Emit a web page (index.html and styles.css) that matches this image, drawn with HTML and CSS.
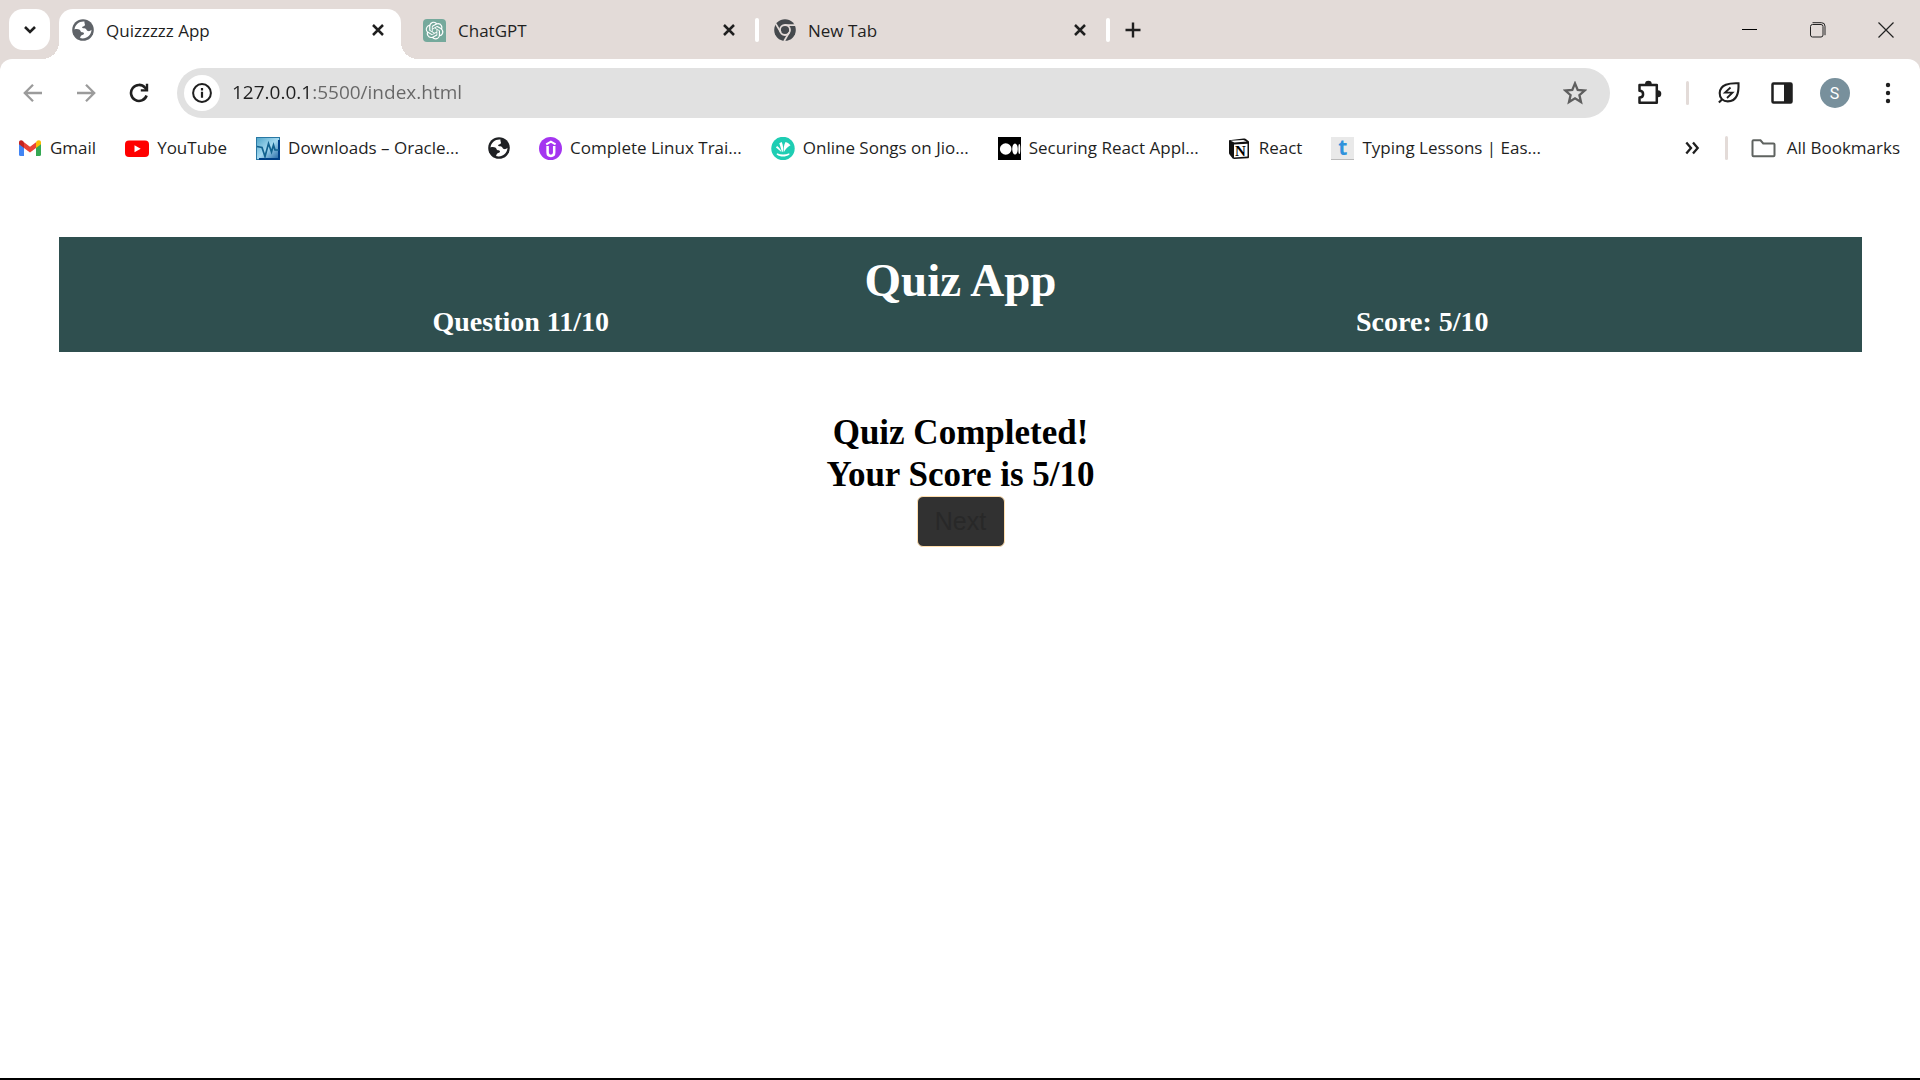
FILE: index.html
```html
<!DOCTYPE html>
<html lang="en">
<head>
<meta charset="utf-8">
<title>Quizzzzz App</title>
<link rel="stylesheet" href="styles.css">
</head>
<body>
<svg class="defs" width="0" height="0" aria-hidden="true">
  <symbol id="globe" viewBox="0 0 22 22">
    <circle cx="11" cy="11" r="10.800" fill="currentColor"/>
    <path fill="#fff" d="M12.500 2.600C7.500 2 3 5.600 2.500 10.400c1.700-.5 4-.4 5.200.4 1 .7.700 2.200 2 2.500 1.200.3 2.300.2 2.300 1.300 0 1.400-1.800 1.200-2.700 2-.8.700-.9 1.800-1.300 2.500 5.500 1.700 11.300-2.200 11.500-8.300-1 1.100-2.300 1.600-3.700 1.200-1.300-.4-1.300-2-2.600-2.500-1.300-.4-3 .1-3.100-1 0-1.300 2-1 2.700-2 .7-1-.8-2.200-.3-3.900z"/>
  </symbol>
  <symbol id="cross" viewBox="0 0 14 14">
    <path d="M2 2l10 10M12 2L2 12" fill="none" stroke="currentColor" stroke-width="2.500"/>
  </symbol>
</svg>

<header class="browser">
  <div class="tabstrip">
    <button class="tab-search" aria-label="Search tabs">
      <svg width="14" height="10" viewBox="0 0 14 10"><path d="M2 2l5 5 5-5" fill="none" stroke="#1f1f1f" stroke-width="2.600"/></svg>
    </button>
    <div class="tab tab-active">
      <svg class="tab-icon gray" width="22" height="22"><use href="#globe"/></svg>
      <span class="tab-title">Quizzzzz App</span>
      <button class="tab-close" aria-label="Close tab"><svg width="14" height="14"><use href="#cross"/></svg></button>
    </div>
    <div class="tab">
      <svg class="tab-icon" width="23" height="23" viewBox="0 0 23 23"><path d="M4 0h15a4 4 0 0 1 4 4v19H4a4 4 0 0 1-4-4V4a4 4 0 0 1 4-4z" fill="#75a99c"/><g transform="translate(2.700 2.700) scale(.74)" fill="#fff"><path d="M22.282 9.821a5.985 5.985 0 0 0-.516-4.911 6.046 6.046 0 0 0-6.510-2.900A6.065 6.065 0 0 0 4.981 4.182a5.985 5.985 0 0 0-3.998 2.900 6.046 6.046 0 0 0 .743 7.097 5.980 5.980 0 0 0 .511 4.911 6.051 6.051 0 0 0 6.515 2.900A5.985 5.985 0 0 0 13.260 24a6.056 6.056 0 0 0 5.772-4.206 5.989 5.989 0 0 0 3.998-2.900 6.056 6.056 0 0 0-.748-7.073zm-9.022 12.608a4.476 4.476 0 0 1-2.876-1.041l.142-.080 4.778-2.758a.795.795 0 0 0 .393-.681v-6.737l2.020 1.169a.071.071 0 0 1 .038.052v5.583a4.504 4.504 0 0 1-4.495 4.494zm-9.661-4.125a4.471 4.471 0 0 1-.535-3.014l.142.085 4.783 2.758a.771.771 0 0 0 .781 0l5.843-3.369v2.332a.080.080 0 0 1-.033.062L9.740 19.950a4.499 4.499 0 0 1-6.141-1.646zM2.341 7.896a4.485 4.485 0 0 1 2.366-1.973V11.600a.766.766 0 0 0 .388.677l5.814 3.354-2.020 1.169a.076.076 0 0 1-.071 0l-4.830-2.787A4.504 4.504 0 0 1 2.341 7.872zm16.596 3.856L13.104 8.364 15.119 7.200a.076.076 0 0 1 .071 0l4.830 2.791a4.494 4.494 0 0 1-.677 8.104v-5.677a.790.790 0 0 0-.407-.667zm2.011-3.023l-.142-.085-4.774-2.782a.776.776 0 0 0-.785 0L9.409 9.230V6.897a.066.066 0 0 1 .028-.062l4.830-2.787a4.499 4.499 0 0 1 6.680 4.660zM8.307 12.863l-2.020-1.164a.080.080 0 0 1-.038-.057V6.074a4.499 4.499 0 0 1 7.376-3.454l-.142.081L8.704 5.459a.795.795 0 0 0-.393.681zm1.098-2.365l2.602-1.500 2.607 1.500v2.999l-2.597 1.500-2.607-1.500z"/></g></svg>
      <span class="tab-title">ChatGPT</span>
      <button class="tab-close" aria-label="Close tab"><svg width="14" height="14"><use href="#cross"/></svg></button>
      <span class="tab-divider"></span>
    </div>
    <div class="tab">
      <svg class="tab-icon" width="22" height="22" viewBox="0 0 22 22"><circle cx="11" cy="11" r="10.800" fill="#45494d"/><circle cx="11" cy="11" r="5" fill="none" stroke="#e3dbd8" stroke-width="1.800"/><path d="M11 6.200h10M6.800 13.400L1.800 4.900M15.200 13.400l-5 8.600" stroke="#e3dbd8" stroke-width="1.800"/></svg>
      <span class="tab-title">New Tab</span>
      <button class="tab-close" aria-label="Close tab"><svg width="14" height="14"><use href="#cross"/></svg></button>
      <span class="tab-divider"></span>
    </div>
    <button class="new-tab" aria-label="New tab"><svg width="16" height="16" viewBox="0 0 16 16"><path d="M8 0.500v15M.5 8h15" stroke="#1f1f1f" stroke-width="2.400"/></svg></button>
    <div class="window-controls">
      <button aria-label="Minimize"><svg width="16" height="16" viewBox="0 0 16 16"><path d="M0 7.500h15" stroke="#000"/></svg></button>
      <button aria-label="Restore"><svg width="16" height="16" viewBox="0 0 16 16" fill="none" stroke="#222"><rect x=".5" y="2.500" width="12.500" height="12.500" rx="2"/><path d="M2.500 .7h9a3.500 3.500 0 0 1 3.500 3.500v9"/></svg></button>
      <button aria-label="Close"><svg width="16" height="16" viewBox="0 0 16 16"><path d="M.5.5l15 15M15.500.5l-15 15" stroke="#222" stroke-width="1.200"/></svg></button>
    </div>
  </div>

  <div class="toolbar">
    <button class="tool" aria-label="Back"><svg width="20" height="20" viewBox="0 0 20 20"><path d="M19 10H2.500M10 1.800L1.800 10l8.200 8.200" fill="none" stroke="#9b9b9b" stroke-width="2.300"/></svg></button>
    <button class="tool" aria-label="Forward"><svg width="20" height="20" viewBox="0 0 20 20"><path d="M1 10h16.500M10 1.800l8.200 8.200-8.200 8.200" fill="none" stroke="#9b9b9b" stroke-width="2.300"/></svg></button>
    <button class="tool" aria-label="Reload"><svg width="20" height="20" viewBox="0 0 20 20"><path d="M17.600 12.500A8 8 0 1 1 16 4.600L18 7" fill="none" stroke="#1f1f1f" stroke-width="2.600"/><path d="M19.200.8v7.700h-7.400V6.200h5V.8z" fill="#1f1f1f"/></svg></button>
    <div class="omnibox">
      <button class="site-info" aria-label="Site information"><svg width="20" height="20" viewBox="0 0 20 20"><circle cx="10" cy="10" r="8.900" fill="none" stroke="#1f1f1f" stroke-width="2"/><path d="M10 8.800v6M10 5v2.400" stroke="#1f1f1f" stroke-width="2.200"/></svg></button>
      <input class="address" type="text" aria-label="Address" value="127.0.0.1:5500/index.html">
      <button class="bookmark-star" aria-label="Bookmark this tab"><svg width="24" height="24" viewBox="0 0 24 24"><path d="M12 2.400l2.700 6.500 7 .6-5.300 4.600 1.600 6.900-6-3.700L6 21l1.600-6.900L2.300 9.500l7-.6z" fill="none" stroke="#5f5f5f" stroke-width="2.300"/></svg></button>
    </div>
    <button class="tool" aria-label="Extensions"><svg width="26" height="26" viewBox="0 0 26 26"><path d="M4.500 5h16.300v17.800H3.500v-5.300c4.800 0 4.800-6.700 0-6.700V5z" fill="none" stroke="#1f1f1f" stroke-width="2.500" stroke-linejoin="round"/><path d="M9 4.200a3.400 3.400 0 0 1 6.800 0zM21.800 10.300a3.400 3.400 0 0 1 0 7z" fill="#1f1f1f"/></svg></button>
    <span class="toolbar-divider"></span>
    <button class="tool" aria-label="Energy Saver"><svg width="24" height="24" viewBox="0 0 24 24" fill="none" stroke="#1f1f1f" stroke-width="2.100"><path d="M21.500 2.300c-9-.4-18.500 1-18.800 9.800-.2 5 3.500 8.300 8 8.300 9.500 0 11.200-9 10.800-18.100zM5.500 18l-3.600 3.600"/><path d="M13.500 6.500L8 11.600h7.500L10 17" stroke-width="1.800"/></svg></button>
    <button class="tool" aria-label="Side panel"><svg width="22" height="22" viewBox="0 0 22 22"><rect x="1.500" y="1.500" width="19" height="19" rx="1" fill="none" stroke="#1f1f1f" stroke-width="2.500"/><path d="M13 1h8v20h-8z" fill="#1f1f1f"/></svg></button>
    <button class="tool" aria-label="Profile"><span class="avatar">S</span></button>
    <button class="tool" aria-label="Menu"><svg width="6" height="22" viewBox="0 0 6 22" fill="#1f1f1f"><circle cx="3" cy="3" r="2.200"/><circle cx="3" cy="11" r="2.200"/><circle cx="3" cy="19" r="2.200"/></svg></button>
  </div>

  <nav class="bookmarks" aria-label="Bookmarks">
    <a class="bookmark" href="#"><svg width="23" height="23" viewBox="0 0 23 23"><path d="M0 6v11.500q0 1.500 1.500 1.500H5V9z" fill="#4285f4"/><path d="M17 9v10h3.500q1.500 0 1.500-1.500V6z" fill="#34a853"/><path d="M17 5.200V11l5-3.700V5.600c0-2.700-2.400-3-4-1.800z" fill="#fbbc04"/><path d="M5 5.200l6 4.500 6-4.500V11l-6 4.500L5 11z" fill="#ea4335"/><path d="M0 5.600v1.700L5 11V5.200L4 4C2.400 2.600 0 3 0 5.600z" fill="#c5221f"/></svg>Gmail</a>
    <a class="bookmark" href="#"><svg width="24" height="23" viewBox="0 0 24 23"><rect y="3.500" width="24" height="16.500" rx="4" fill="#f00"/><path d="M9.500 8.200v7l6.200-3.500z" fill="#fff"/></svg>YouTube</a>
    <a class="bookmark" href="#"><svg width="24" height="23" viewBox="0 0 24 23"><defs><linearGradient id="wave" x2="1" y2="1"><stop stop-color="#4fa5c9"/><stop offset=".5" stop-color="#a5d9f0"/><stop offset="1" stop-color="#1a5fa0"/></linearGradient></defs><rect x=".5" y=".5" width="23" height="22" fill="url(#wave)" stroke="#2878a4"/><path d="M23 3v19H3" fill="none" stroke="#003f86" stroke-width="2"/><path d="M1 9.500l5 1 3 9 3.500-13 3 8.500 2-7 1.500 5h4" fill="none" stroke="#12628f" stroke-width="1.700"/></svg>Downloads – Oracle...</a>
    <a class="bookmark" href="#" aria-label="Site"><svg class="dark" width="22" height="22"><use href="#globe"/></svg></a>
    <a class="bookmark" href="#"><svg width="23" height="23" viewBox="0 0 23 23"><circle cx="11.500" cy="11.500" r="11.500" fill="#a435f0"/><path d="M7.200 7.400l4.700-2.800 4.700 2.800" fill="none" stroke="#fff" stroke-width="2"/><path d="M8.600 9v6.500c0 4.500 6.600 4.500 6.600 0V9" fill="none" stroke="#fff" stroke-width="2.500"/></svg>Complete Linux Trai...</a>
    <a class="bookmark" href="#"><svg width="24" height="23" viewBox="0 0 24 23"><circle cx="12" cy="11.500" r="11.700" fill="#1ecdb3"/><g fill="#fff"><path d="M12.800 15.300c-.6-4 .2-7.500 1.700-10.300 2.100.6 3.700 1.700 5 3.300-2.600 1.600-5 3.700-6.700 7zM11.600 15.300c-1-1-1.700-4.500-3.300-9.100l2.400-1.200c1.500 3.600 1.900 6.700.9 10.300zM10.500 15.300c-1.700-1.400-3.200-3-5.600-4.700l1.200-1.500c2.300 1.700 3.700 3.400 4.400 6.200zM6 16.200c3.800 1.600 8.500 1.600 12.200 0l.3 1.200c-4 2.800-9 2.800-12.900 0z"/></g></svg>Online Songs on Jio...</a>
    <a class="bookmark" href="#"><svg width="23" height="23" viewBox="0 0 23 23"><path d="M0 0h23v23H0z" fill="#000"/><g fill="#fff"><circle cx="7.700" cy="12" r="5.800"/><ellipse cx="17" cy="12" rx="2.800" ry="5.500"/><ellipse cx="21.300" cy="12" rx="1" ry="5"/></g></svg>Securing React Appl...</a>
    <a class="bookmark" href="#"><svg width="23" height="23" viewBox="0 0 23 23"><path d="M1 3.200l14.500-1.700c1.500-.1 2 .2 3 1L21 4.600V20c0 .8-.5 1.300-1.300 1.300L6 22c-.8 0-1.200-.2-1.700-.9L1.600 17.600C1.200 17 1 16.600 1 16z" fill="#111"/><path d="M2.600 3.800L15.300 2.900l3.500 1.700L6.300 5.400zM6 7.500l13.500-.8v12.800L6 20.400z" fill="#fff"/><text class="notion-n" x="7" y="18.500">N</text></svg>React</a>
    <a class="bookmark" href="#"><span class="typing-icon">t</span>Typing Lessons | Eas...</a>
    <div class="bookmarks-end">
      <button class="overflow" aria-label="More bookmarks"><svg width="15" height="14" viewBox="0 0 15 14"><path d="M1.300 1.500L6 7l-4.700 5.500M8 1.500L12.700 7 8 12.500" fill="none" stroke="#1f1f1f" stroke-width="2.300"/></svg></button>
      <span class="bookmarks-divider"></span>
      <a class="bookmark all" href="#"><svg width="25" height="23" viewBox="0 0 25 23"><path d="M2.500 3.300h7l2.700 3.200h10.300q1 0 1 1v10.800q0 1-1 1h-20q-1 0-1-1v-14q0-1 1-1z" fill="none" stroke="#5f6360" stroke-width="2"/></svg>All Bookmarks</a>
    </div>
  </nav>
</header>

<main class="quiz">
  <section class="quiz-header">
    <h1>Quiz App</h1>
    <div class="quiz-status"><h2>Question 11/10</h2><h2>Score: 5/10</h2></div>
  </section>
  <section class="quiz-result">
    <p>Quiz Completed!</p>
    <p>Your Score is 5/10</p>
    <button class="next" disabled>Next</button>
  </section>
</main>
</body>
</html>
```
FILE: styles.css
```css
* { box-sizing: border-box; }

body {
  margin: 0;
  min-height: 100vh;
  background: #fff;
  border-bottom: 2px solid #000;
  font-family: "Open Sans", sans-serif;
  color: #1f1f1f;
}

button {
  padding: 0;
  border: 0;
  background: none;
  color: inherit;
  font: inherit;
}

svg { display: block; flex: none; }
.defs { position: absolute; }
.gray { color: #5f6368; }
.dark { color: #1f2124; }

/* Tab strip */
.browser { background: #e3dbd8; }

.tabstrip {
  display: flex;
  height: 59px;
  padding-left: 9px;
}

.tab-search {
  display: grid;
  place-items: center;
  width: 41px;
  height: 41px;
  margin: 9px 9px 0 0;
  border-radius: 14px;
  background: #fff;
}

.tab {
  position: relative;
  display: flex;
  align-items: center;
  width: 342px;
  height: 50px;
  margin: 9px 9px 0 0;
  padding: 0 13px 8px 13px;
  font-size: 17px;
}

.tab-active {
  border-radius: 14px 14px 0 0;
  background: #fff;
}

.tab-active::before,
.tab-active::after {
  content: "";
  position: absolute;
  bottom: 0;
  width: 17px;
  height: 17px;
}

.tab-active::before {
  right: 100%;
  background: radial-gradient(circle at 0 0, transparent 17px, #fff 17px);
}

.tab-active::after {
  left: 100%;
  background: radial-gradient(circle at 100% 0, transparent 17px, #fff 17px);
}

.tab-title { flex: 1; padding-left: 12px; }

.tab-close {
  display: grid;
  place-items: center;
  width: 20px;
  height: 20px;
}

.tab-divider {
  position: absolute;
  top: 9px;
  right: -7px;
  width: 4px;
  height: 24px;
  border-radius: 2px;
  background: #fff;
}

.new-tab {
  display: grid;
  place-items: center;
  width: 42px;
  height: 42px;
  margin-top: 9px;
}

.window-controls {
  display: flex;
  margin-left: auto;
}

.window-controls button {
  display: grid;
  place-items: center;
  width: 68px;
  height: 59px;
}

/* Toolbar */
.toolbar {
  display: flex;
  align-items: center;
  height: 68px;
  padding: 0 6px;
  border-radius: 12px 12px 0 0;
  background: #fff;
}

.tool {
  display: grid;
  place-items: center;
  width: 53px;
  height: 50px;
}

.omnibox {
  display: flex;
  flex: 1;
  align-items: center;
  height: 50px;
  margin: 0 12px;
  padding: 0 23px 0 7px;
  border-radius: 25px;
  background: #e1e1e1;
}

.site-info {
  display: grid;
  place-items: center;
  width: 36px;
  height: 36px;
  border-radius: 50%;
  background: #fff;
}

.address {
  flex: 1;
  height: 36px;
  margin-left: 12px;
  padding: 0 0 2px;
  border: 0;
  outline: 0;
  /* Host in dark, port and path in grey */
  background: linear-gradient(90deg, #1f1f1f 80px, #666 80px);
  -webkit-background-clip: text;
  background-clip: text;
  color: transparent;
  font: 19px "Open Sans", sans-serif;
}

.toolbar-divider {
  width: 3px;
  height: 24px;
  margin: 0 13px 0 11px;
  border-radius: 2px;
  background: #e3dbd8;
}

.avatar {
  display: grid;
  place-items: center;
  width: 30px;
  height: 30px;
  border-radius: 50%;
  background: #78909c;
  color: #fff;
  font: 16px Roboto, sans-serif;
}

/* Bookmarks bar */
.bookmarks {
  display: flex;
  align-items: center;
  gap: 29px;
  height: 50px;
  padding: 0 20px 8px 19px;
  background: #fff;
}

.bookmark {
  display: flex;
  align-items: center;
  gap: 8px;
  color: #1f1f1f;
  font-size: 17px;
  line-height: 24px;
  text-decoration: none;
  white-space: nowrap;
}

.notion-n { font: bold 15px "Liberation Serif", serif; }

.typing-icon {
  width: 23px;
  height: 23px;
  border-bottom: 1px solid #bbb;
  background: #e9e9e9;
  color: #2f92dc;
  font: bold 21px/20px "Open Sans", sans-serif;
  text-align: center;
}

.bookmarks-end {
  display: flex;
  align-items: center;
  margin-left: auto;
}

.bookmarks-divider {
  width: 3px;
  height: 24px;
  margin: 0 23px 0 25px;
  border-radius: 2px;
  background: #e3dbd8;
}

.all { gap: 11px; }

/* Quiz page */
.quiz {
  padding: 60px 58px 60px 59px;
  font-family: "Liberation Serif", serif;
}

.quiz-header {
  padding: 16px 0 15px;
  background: #2f4f4f;
  color: #fff;
}

.quiz h1,
.quiz h2,
.quiz p { margin: 0; font-weight: bold; }

.quiz h1 {
  font-size: 47px;
  line-height: 54px;
  text-align: center;
}

.quiz-status {
  display: flex;
  justify-content: space-around;
}

.quiz h2 { font-size: 28px; line-height: 30px; }

.quiz-result {
  display: flex;
  flex-direction: column;
  align-items: center;
  padding-top: 60px;
  color: #000;
}

.quiz-result p { font-size: 35px; line-height: 42px; }

.next {
  width: 88px;
  height: 51px;
  border: 1px solid #ffdead;
  border-radius: 6px;
  background: #313131;
  color: #282828;
  font: 25px "Liberation Sans", sans-serif;
}
```
